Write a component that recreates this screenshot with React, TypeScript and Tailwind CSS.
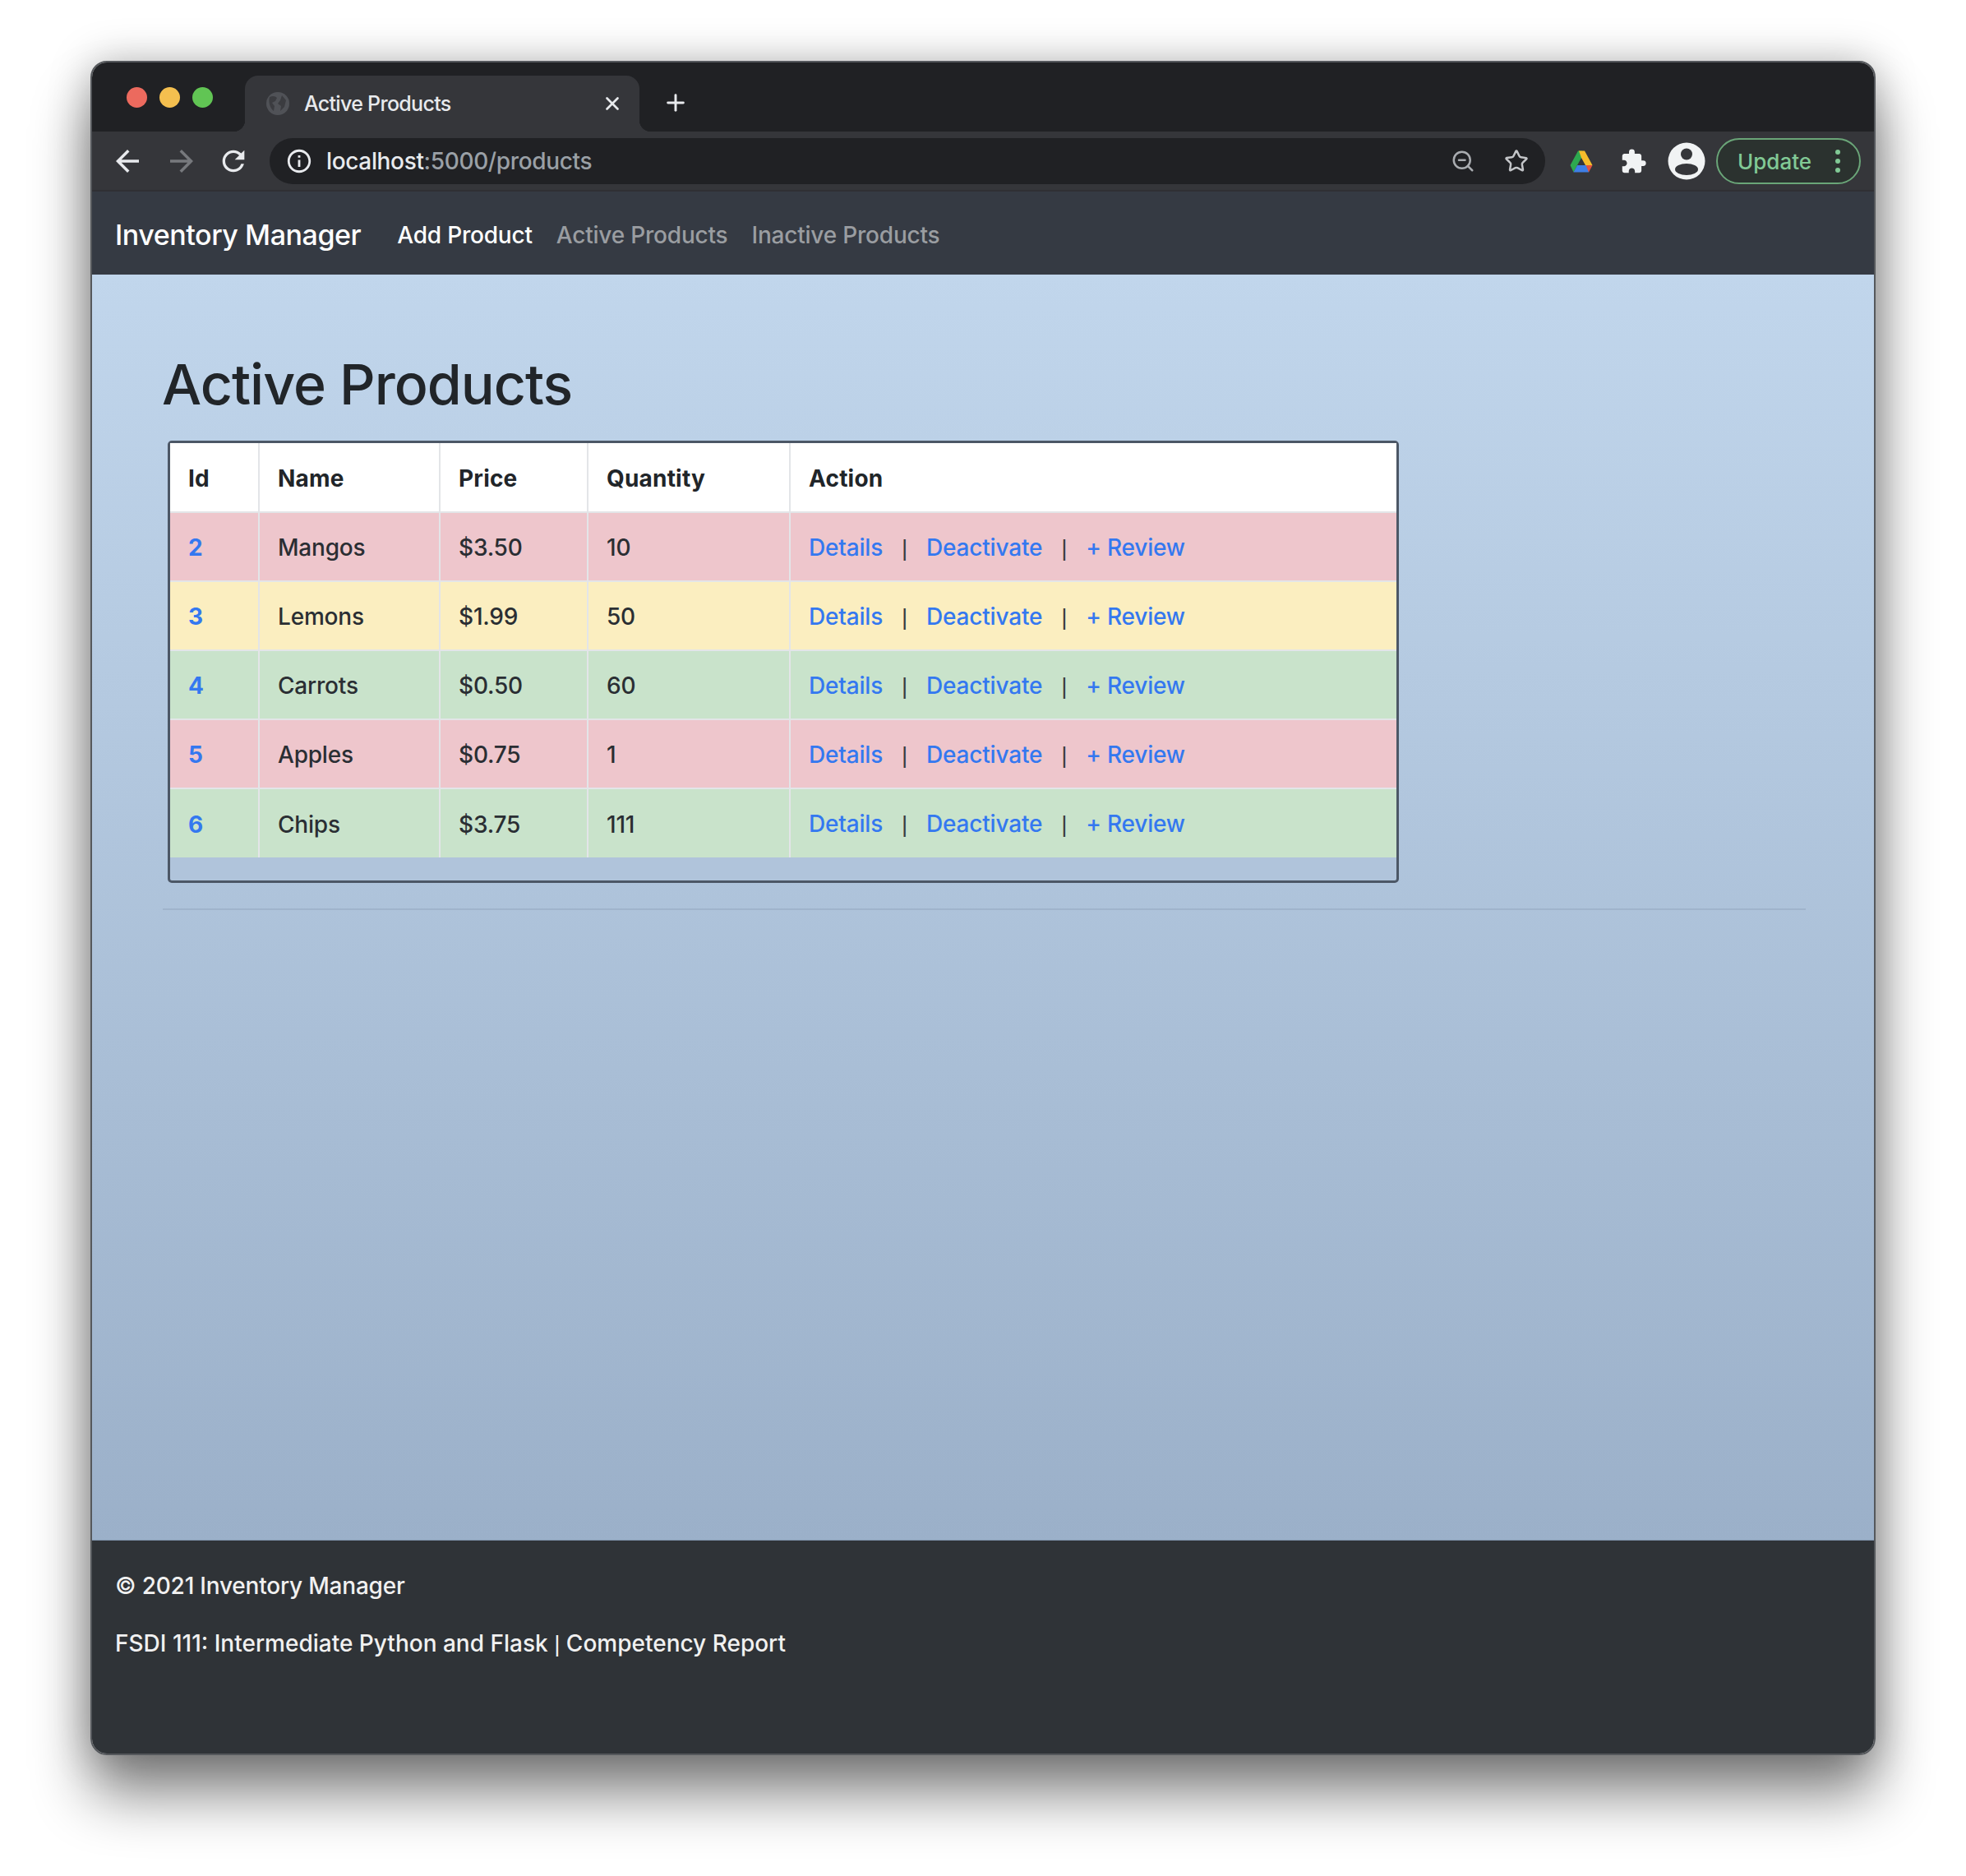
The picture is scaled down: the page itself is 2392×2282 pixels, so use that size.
import { Plus, Star, X, ZoomOut } from 'lucide-react'
import { MdArrowBack, MdArrowForward, MdExtension, MdInfoOutline, MdRefresh } from 'react-icons/md'

interface Product {
  id: number
  name: string
  price: string
  quantity: number
  color: string
}

const products: Product[] = [
  { id: 2, name: 'Mangos', price: '$3.50', quantity: 10, color: 'bg-[#eec6cc]' },
  { id: 3, name: 'Lemons', price: '$1.99', quantity: 50, color: 'bg-[#fbeec0]' },
  { id: 4, name: 'Carrots', price: '$0.50', quantity: 60, color: 'bg-[#c9e3cb]' },
  { id: 5, name: 'Apples', price: '$0.75', quantity: 1, color: 'bg-[#eec6cc]' },
  { id: 6, name: 'Chips', price: '$3.75', quantity: 111, color: 'bg-[#c9e3cb]' },
]

function DriveIcon() {
  return (
    <svg width="28" height="27" viewBox="0 0 28 27">
      <path d="M10 0.500h5L14 9l-5 9-4.500 8.500L0.500 18z" fill="#2da94f" />
      <path d="M11 0.500h7L27.500 18H19l-5-9z" fill="#f6bd2b" />
      <path d="M9 18h15l-1 8.500H4.500z" fill="#3f7fe6" />
      <path d="M19.500 18h8L23 26.500z" fill="#e2533f" />
    </svg>
  )
}

function AvatarIcon() {
  return (
    <svg width="46" height="46" viewBox="0 0 46 46">
      <circle cx="23" cy="23" r="22.500" fill="#f1f3f4" />
      <circle cx="23" cy="14.500" r="7" fill="#35363a" />
      <ellipse cx="23" cy="33" rx="14" ry="7" fill="#35363a" />
    </svg>
  )
}

function GlobeIcon() {
  return (
    <svg width="28" height="28" viewBox="0 0 28 28">
      <circle cx="14" cy="14" r="14" fill="#505257" />
      <path d="M4 6c4-2 7-1 9 1l-2 4-4 2 3 4-1 6C5 20 2 12 4 6z" fill="#3b3c40" />
      <path d="M19 4l5 6-2 8-5 5 1-6-4-3 3-4z" fill="#3b3c40" />
    </svg>
  )
}

function BrowserChrome() {
  return (
    <>
      <div className="flex h-[84px] shrink-0 items-end bg-[#202124]">
        <div className="flex h-[68px] items-center gap-[15px] pb-[16px] pl-[42px]">
          <span className="h-[25px] w-[25px] rounded-full bg-[#ec6a5e]" />
          <span className="h-[25px] w-[25px] rounded-full bg-[#f4bf4f]" />
          <span className="h-[25px] w-[25px] rounded-full bg-[#61c554]" />
        </div>
        <div className="relative ml-[39px] flex h-[68px] w-[480px] items-center rounded-t-[16px] bg-[#35363a] pl-[26px] pr-[20px] before:absolute before:bottom-0 before:left-[-14px] before:h-[14px] before:w-[14px] before:bg-[radial-gradient(circle_at_0_0,transparent_14px,#35363a_14.500px)] after:absolute after:bottom-0 after:right-[-14px] after:h-[14px] after:w-[14px] after:bg-[radial-gradient(circle_at_100%_0,transparent_14px,#35363a_14.500px)]">
          <GlobeIcon />
          <span className="ml-[18px] mt-[1px] flex-1 text-[25px] font-[450] tracking-[-0.7px] text-[#e8eaed]">Active Products</span>
          <X size={26} strokeWidth={2.5} className="text-[#e8eaed]" />
        </div>
        <Plus size={32} strokeWidth={2.2} className="mb-[19px] ml-[28px] text-[#e8eaed]" />
      </div>
      <div className="flex h-[73px] shrink-0 items-center border-b-2 border-[#2f3034] bg-[#35363a] pl-[22px] pt-[1px]">
        <MdArrowBack size={42} className="text-[#e8eaed]" />
        <MdArrowForward size={42} className="ml-[24px] text-[#77797d]" />
        <MdRefresh size={40} className="ml-[22px] text-[#e8eaed]" />
        <div className="ml-[24px] flex h-[56px] w-[1552px] items-center rounded-full bg-[#202124] pl-[19px] pr-[20px]">
          <MdInfoOutline size={34} className="text-[#e8eaed]" />
          <span className="ml-[16px] flex-1 text-[28px] font-[450] tracking-[-0.35px] text-[#9aa0a6]">
            <span className="text-[#e8eaed]">localhost</span>:5000/products
          </span>
          <ZoomOut size={30} strokeWidth={2} className="text-[#a9acb0]" />
          <Star size={30} strokeWidth={2} className="ml-[35px] text-[#c4c6c9]" />
        </div>
        <div className="ml-[30px]">
          <DriveIcon />
        </div>
        <MdExtension size={33} className="ml-[33px] text-[#f1f3f4]" />
        <div className="ml-[25px]">
          <AvatarIcon />
        </div>
        <div className="ml-[13px] flex h-[56px] w-[176px] items-center rounded-full border-2 border-[#6aa578] bg-[#2b322f] pl-[24px]">
          <span className="flex-1 text-[26px] font-medium text-[#81c995]">Update</span>
          <div className="mr-[23px] flex flex-col gap-[5px]">
            <span className="h-[6px] w-[6px] rounded-full bg-[#81c995]" />
            <span className="h-[6px] w-[6px] rounded-full bg-[#81c995]" />
            <span className="h-[6px] w-[6px] rounded-full bg-[#81c995]" />
          </div>
        </div>
      </div>
    </>
  )
}

function Pipe() {
  return <span className="mx-[23px] font-['Liberation_Sans',sans-serif] text-[#3a3d40]">|</span>
}

function ProductTable() {
  const th = 'border-r-2 border-[#e3e5e8] pl-[22px] pt-[2px] text-left font-bold tracking-[0.2px]'
  const td = 'border-r-2 border-t-2 border-[#e3e5e8] pl-[22px] pt-[2px]'
  return (
    <div className="ml-[6px] h-[538px] w-[1498px] rounded-[5px] border-[3px] border-[#4c5766] bg-[#b0c4db]">
      <table className="w-full table-fixed border-collapse text-[28px] font-[450] tracking-[-0.2px] text-[#2a2e33]">
        <colgroup>
          <col className="w-[108px]" />
          <col className="w-[220px]" />
          <col className="w-[180px]" />
          <col className="w-[246px]" />
          <col />
        </colgroup>
        <thead>
          <tr className="h-[84px] bg-white text-[#212529]">
            <th className={th}>Id</th>
            <th className={th}>Name</th>
            <th className={th}>Price</th>
            <th className={th}>Quantity</th>
            <th className="pl-[22px] pt-[2px] text-left font-bold tracking-[0.2px]">Action</th>
          </tr>
        </thead>
        <tbody>
          {products.map((p) => (
            <tr key={p.id} className={`h-[84px] ${p.color}`}>
              <td className={`${td} font-bold text-[#3478f0]`}>{p.id}</td>
              <td className={td}>{p.name}</td>
              <td className={td}>{p.price}</td>
              <td className={td}>{p.quantity}</td>
              <td className="border-t-2 border-[#e3e5e8] pl-[22px] pt-[2px]">
                <span className="text-[#3478f0]">Details</span>
                <Pipe />
                <span className="text-[#3478f0]">Deactivate</span>
                <Pipe />
                <span className="text-[#3478f0]">+ Review</span>
              </td>
            </tr>
          ))}
        </tbody>
      </table>
    </div>
  )
}

export default function App() {
  return (
    <div className="h-[2282px] w-[2392px] bg-white px-[110px] pt-[74px] font-['Inter',sans-serif]">
      <div className="flex h-[2061px] flex-col overflow-hidden rounded-[20px] border-2 border-[#55585c] shadow-[0_48px_70px_rgba(0,0,0,0.48),0_0_50px_rgba(0,0,0,0.25)]">
        <BrowserChrome />
        <nav className="flex h-[101px] shrink-0 items-center bg-[#353a43] pl-[28px] pt-[3px]">
          <span className="text-[34px] font-[450] tracking-[-0.45px] text-white">Inventory Manager</span>
          <span className="ml-[44px] mt-[2px] text-[28px] font-medium tracking-[-0.2px] text-white">Add Product</span>
          <span className="ml-[29px] mt-[2px] text-[28px] font-medium tracking-[-0.2px] text-[#9a9da1]">Active Products</span>
          <span className="ml-[29px] mt-[2px] text-[28px] font-medium tracking-[-0.2px] text-[#9a9da1]">Inactive Products</span>
        </nav>
        <main className="flex flex-1 flex-col bg-linear-to-b from-[#c1d6ec] to-[#9bb0c9] pl-[86px] pr-[83px] pt-[91px]">
          <h1 className="-ml-[1px] mb-[27px] text-[68px] font-[550] leading-[84px] tracking-[-1px] text-[#212529]">Active Products</h1>
          <ProductTable />
          <hr className="mt-[31px] border-t-2 border-[#a0b4cc]" />
        </main>
        <footer className="h-[260px] shrink-0 border-t border-[#7f93aa] bg-[#2f3337] pl-[28px] pt-[35px] text-[28px] font-[450] text-[#f1f1f1]">
          <p className="leading-[40px] tracking-[-0.2px]">© 2021 Inventory Manager</p>
          <p className="mt-[30px] leading-[40px]">
            FSDI 111: Intermediate Python and Flask <span className="font-['Liberation_Sans',sans-serif]">|</span> Competency Report
          </p>
        </footer>
      </div>
    </div>
  )
}
